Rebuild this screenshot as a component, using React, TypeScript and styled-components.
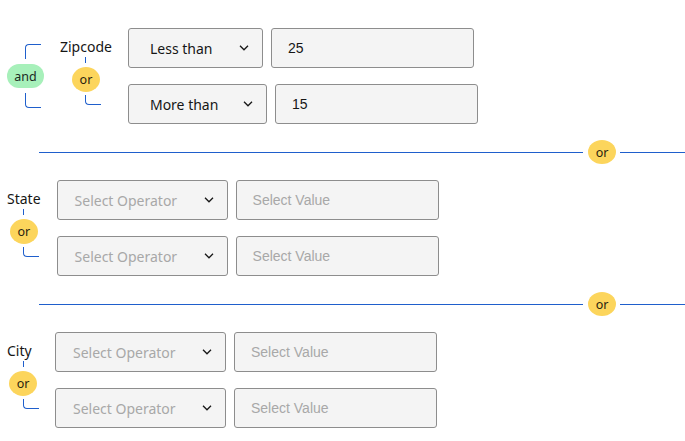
import React from "react";
import styled, { createGlobalStyle } from "styled-components";

const Global = createGlobalStyle`
  html, body { margin: 0; padding: 0; background: #ffffff; }
  body { font-family: "Noto Sans", "Open Sans", sans-serif; color: #161616; }
`;

const BLUE = "#1f5fcc";

const Page = styled.div`
  width: 685px;
  padding: 28px 0 0 7px;
  box-sizing: border-box;
  display: flex;
  flex-direction: column;
`;

const Group = styled.div`
  display: flex;
  align-items: flex-start;
  gap: 16px;
`;

const AndCol = styled.div`
  align-self: stretch;
  width: 37px;
  display: flex;
  flex-direction: column;
  align-items: center;
  justify-content: center;
`;

const AndBracket = styled.div<{ $pos: "top" | "bottom" }>`
  width: 15px;
  height: 14px;
  margin-left: 15px;
  border-left: 1px solid ${BLUE};
  ${(p) =>
    p.$pos === "top"
      ? `border-top: 1px solid ${BLUE}; border-top-left-radius: 4px;`
      : `border-bottom: 1px solid ${BLUE}; border-bottom-left-radius: 4px;`}
`;

const AndPill = styled.div`
  width: 37px;
  height: 24px;
  margin: 5px 0;
  border-radius: 12px;
  background: #a7f0ba;
  font-size: 12.5px;
  display: flex;
  align-items: center;
  justify-content: center;
  color: #1b2a1f;
`;

const LeftCol = styled.div`
  display: flex;
  flex-direction: column;
  align-items: flex-start;
  padding-top: 10px;
`;

const Label = styled.div`
  font-size: 14px;
  line-height: 18px;
  white-space: nowrap;
`;

const Connector = styled.div`
  align-self: center;
  width: 32px;
  display: flex;
  flex-direction: column;
  align-items: center;
`;

const Tick = styled.div`
  width: 1px;
  height: 6px;
  margin-top: 1px;
  background: ${BLUE};
`;

const OrPill = styled.div`
  width: 28px;
  height: 25px;
  margin-top: 4px;
  border-radius: 50%;
  background: #fcd55c;
  font-size: 12.5px;
  display: flex;
  align-items: center;
  justify-content: center;
  color: #2a2410;
`;

const Curl = styled.div`
  width: 15px;
  height: 9px;
  margin-top: 3px;
  margin-left: 15px;
  border-left: 1px solid ${BLUE};
  border-bottom: 1px solid ${BLUE};
  border-bottom-left-radius: 4px;
`;

const Rows = styled.div`
  display: flex;
  flex-direction: column;
  gap: 16px;
`;

const Row = styled.div`
  display: flex;
  gap: 8px;
`;

const Select = styled.div<{ $w: number; $pad: number; $placeholder?: boolean }>`
  width: ${(p) => p.$w}px;
  height: 40px;
  box-sizing: border-box;
  padding: 0 13px 0 ${(p) => p.$pad}px;
  background: #f4f4f4;
  border: 1px solid #8d8d8d;
  border-radius: 3px;
  display: flex;
  align-items: center;
  justify-content: space-between;
  font-size: 14px;
  color: ${(p) => (p.$placeholder ? "#a8a8a8" : "#161616")};
  white-space: nowrap;
`;

const ValueBox = styled.div<{ $placeholder?: boolean }>`
  width: 203px;
  height: 40px;
  box-sizing: border-box;
  padding: 0 16px;
  background: #f4f4f4;
  border: 1px solid #8d8d8d;
  border-radius: 3px;
  display: flex;
  align-items: center;
  font-family: "Liberation Sans", Arial, sans-serif;
  font-size: 14px;
  color: ${(p) => (p.$placeholder ? "#a8a8a8" : "#161616")};
`;

const Divider = styled.div`
  display: flex;
  align-items: center;
  margin: 16px 0;
  padding-left: 32px;
  height: 24px;
`;

const Line = styled.div<{ $w?: number }>`
  height: 1px;
  background: ${BLUE};
  ${(p) => (p.$w ? `width: ${p.$w}px;` : "flex: 1;")}
`;

const DividerPill = styled(OrPill)`
  margin: 0 4px 0 5px;
  height: 24px;
`;

const Chevron = () => (
  <svg width="10" height="6" viewBox="0 0 10 6" fill="none">
    <path d="M1 0.8 L5 4.8 L9 0.8" stroke="#161616" strokeWidth="1.3" />
  </svg>
);

type Cond = { op?: string; value?: string; w: number };

const Conditions = ({ items, pad }: { items: Cond[]; pad: number }) => (
  <Rows>
    {items.map((c, i) => (
      <Row key={i}>
        <Select $w={c.w} $pad={pad} $placeholder={!c.op}>
          <span>{c.op ?? "Select Operator"}</span>
          <Chevron />
        </Select>
        <ValueBox $placeholder={!c.value}>{c.value ?? "Select Value"}</ValueBox>
      </Row>
    ))}
  </Rows>
);

const FieldLabel = ({ name }: { name: string }) => (
  <LeftCol>
    <Label>{name}</Label>
    <Connector>
      <Tick />
      <OrPill>or</OrPill>
      <Curl />
    </Connector>
  </LeftCol>
);

const OrDivider = () => (
  <Divider>
    <Line />
    <DividerPill>or</DividerPill>
    <Line $w={65} />
  </Divider>
);

export default function App() {
  return (
    <>
      <Global />
      <Page>
        <Group>
          <AndCol>
            <AndBracket $pos="top" />
            <AndPill>and</AndPill>
            <AndBracket $pos="bottom" />
          </AndCol>
          <FieldLabel name="Zipcode" />
          <Conditions
            pad={21}
            items={[
              { op: "Less than", value: "25", w: 135 },
              { op: "More than", value: "15", w: 139 },
            ]}
          />
        </Group>
        <OrDivider />
        <Group>
          <FieldLabel name="State" />
          <Conditions pad={17} items={[{ w: 171 }, { w: 171 }]} />
        </Group>
        <OrDivider />
        <Group>
          <FieldLabel name="City" />
          <Conditions pad={17} items={[{ w: 171 }, { w: 171 }]} />
        </Group>
      </Page>
    </>
  );
}
